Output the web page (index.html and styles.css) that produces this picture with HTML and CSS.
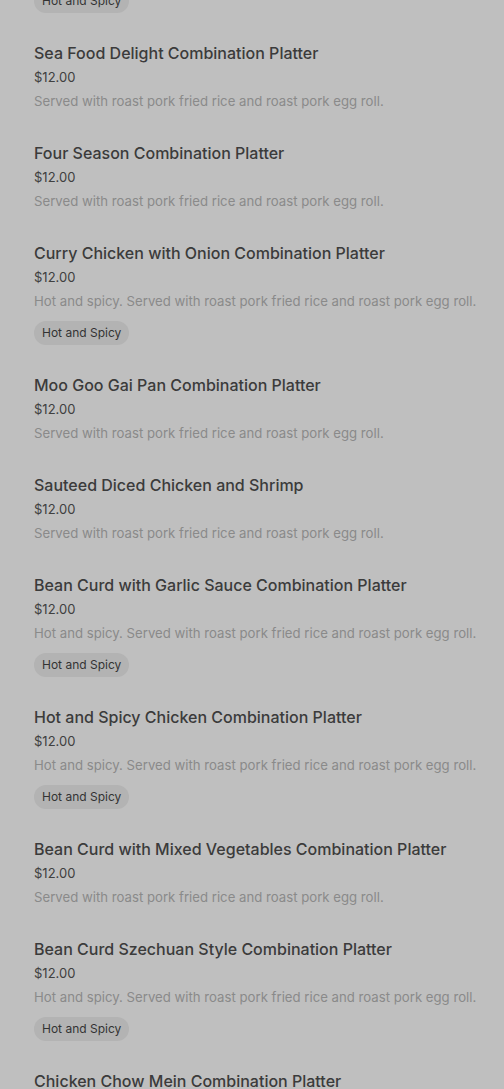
FILE: index.html
```html
<!DOCTYPE html>
<html>
<head>
  <meta charset="UTF-8">
  <title>Combination Platters</title>
  <link rel="stylesheet" href="styles.css">
</head>
<body>
  <div class="menu-list">
    <div class="menu-item">
      <div class="item-name">Kung Pao Chicken Combination Platter</div>
      <div class="item-price">$12.00</div>
      <div class="item-desc">Hot and spicy. Served with roast pork fried rice and roast pork egg roll.</div>
      <span class="item-tag">Hot and Spicy</span>
    </div>
    <div class="menu-item">
      <div class="item-name">Sea Food Delight Combination Platter</div>
      <div class="item-price">$12.00</div>
      <div class="item-desc">Served with roast pork fried rice and roast pork egg roll.</div>
    </div>
    <div class="menu-item">
      <div class="item-name">Four Season Combination Platter</div>
      <div class="item-price">$12.00</div>
      <div class="item-desc">Served with roast pork fried rice and roast pork egg roll.</div>
    </div>
    <div class="menu-item">
      <div class="item-name">Curry Chicken with Onion Combination Platter</div>
      <div class="item-price">$12.00</div>
      <div class="item-desc">Hot and spicy. Served with roast pork fried rice and roast pork egg roll.</div>
      <span class="item-tag">Hot and Spicy</span>
    </div>
    <div class="menu-item">
      <div class="item-name">Moo Goo Gai Pan Combination Platter</div>
      <div class="item-price">$12.00</div>
      <div class="item-desc">Served with roast pork fried rice and roast pork egg roll.</div>
    </div>
    <div class="menu-item">
      <div class="item-name">Sauteed Diced Chicken and Shrimp</div>
      <div class="item-price">$12.00</div>
      <div class="item-desc">Served with roast pork fried rice and roast pork egg roll.</div>
    </div>
    <div class="menu-item">
      <div class="item-name">Bean Curd with Garlic Sauce Combination Platter</div>
      <div class="item-price">$12.00</div>
      <div class="item-desc">Hot and spicy. Served with roast pork fried rice and roast pork egg roll.</div>
      <span class="item-tag">Hot and Spicy</span>
    </div>
    <div class="menu-item">
      <div class="item-name">Hot and Spicy Chicken Combination Platter</div>
      <div class="item-price">$12.00</div>
      <div class="item-desc">Hot and spicy. Served with roast pork fried rice and roast pork egg roll.</div>
      <span class="item-tag">Hot and Spicy</span>
    </div>
    <div class="menu-item">
      <div class="item-name">Bean Curd with Mixed Vegetables Combination Platter</div>
      <div class="item-price">$12.00</div>
      <div class="item-desc">Served with roast pork fried rice and roast pork egg roll.</div>
    </div>
    <div class="menu-item">
      <div class="item-name">Bean Curd Szechuan Style Combination Platter</div>
      <div class="item-price">$12.00</div>
      <div class="item-desc">Hot and spicy. Served with roast pork fried rice and roast pork egg roll.</div>
      <span class="item-tag">Hot and Spicy</span>
    </div>
    <div class="menu-item">
      <div class="item-name">Chicken Chow Mein Combination Platter</div>
      <div class="item-price">$12.00</div>
      <div class="item-desc">Served with roast pork fried rice and roast pork egg roll.</div>
    </div>
  </div>
</body>
</html>
```

FILE: styles.css
```css
body {
  margin: 0;
  font-family: Inter, "Noto Sans", sans-serif;
  background: #bfbfbf;
  overflow: hidden;
}

.menu-list {
  margin-top: -105px;
}

.menu-item {
  display: flex;
  flex-direction: column;
  align-items: flex-start;
  padding: 14px 34px;
}

.item-name {
  font-size: 16px;
  font-weight: 500;
  line-height: 24px;
  color: #3b3b3b;
}

.item-price {
  font-size: 13px;
  line-height: 24px;
  color: #404040;
}

.item-desc {
  font-size: 13.2px;
  line-height: 24px;
  color: #8a8a8a;
  white-space: nowrap;
}

.item-tag {
  margin-top: 8px;
  padding: 0 8px;
  height: 24px;
  line-height: 24px;
  border-radius: 12px;
  background: #b3b3b3;
  color: #333;
  font-size: 12px;
}
```
